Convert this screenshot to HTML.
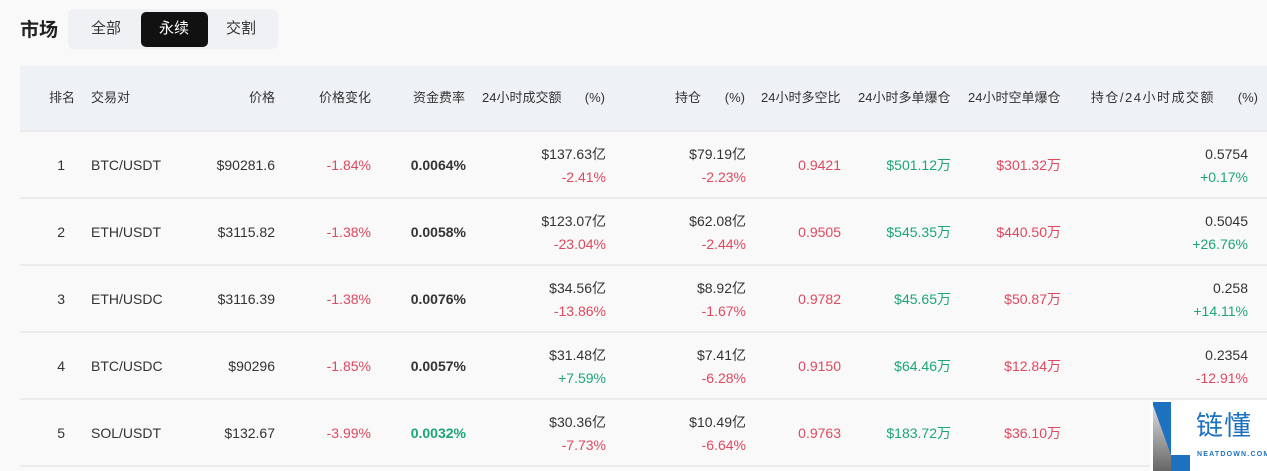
<!DOCTYPE html>
<html><head><meta charset="utf-8"><style>
body{margin:0;width:1267px;height:471px;background:#f9f9f9;font-family:"Liberation Sans","Noto Sans CJK SC",sans-serif;color:#333;overflow:hidden;position:relative}
.a{position:absolute;font-size:14px;line-height:16px;white-space:nowrap}
.h{font-size:13px;color:#333}
.red{color:#e0485e}.grn{color:#1ca57a}
.b{font-weight:bold}
.line{position:absolute;left:20px;right:0;height:2px;background:#ececec}
</style></head><body>
<div class="a" style="left:20px;top:20px;font-size:19px;line-height:22px;font-weight:bold;color:#222">市场</div>
<div style="position:absolute;left:68px;top:9px;width:210px;height:40px;background:#eff1f4;border-radius:6px"></div>
<div class="a" style="left:91px;top:21px;font-size:15px;color:#333">全部</div>
<div style="position:absolute;left:141px;top:12px;width:67px;height:35px;background:#111;border-radius:5px"></div>
<div class="a" style="left:159px;top:21px;font-size:15px;color:#fff">永续</div>
<div class="a" style="left:226px;top:21px;font-size:15px;color:#333">交割</div>
<div style="position:absolute;left:20px;top:66px;right:0;height:64px;background:#eef1f5"></div>
<div class="line" style="top:130px"></div>
<div class="line" style="top:197px"></div>
<div class="line" style="top:264px"></div>
<div class="line" style="top:331px"></div>
<div class="line" style="top:398px"></div>
<div class="line" style="top:465px"></div>
<script>
function t(txt,x,y,cls,right,st){var d=document.createElement('div');d.className='a '+(cls||'');d.textContent=txt;d.style.top=y+'px';if(right){d.style.right=(1267-x)+'px';d.style.textAlign='right';}else d.style.left=x+'px';if(st)d.style.cssText+=st;document.body.appendChild(d);}
var hy=90;
t('排名',49,hy,'h');t('交易对',91,hy,'h');t('价格',275,hy,'h',1);t('价格变化',371,hy,'h',1);t('资金费率',465,hy,'h',1);
t('24小时成交额',482,hy,'h');t('(%)',605,hy,'h',1);t('持仓',701,hy,'h',1);t('(%)',745,hy,'h',1);
t('24小时多空比',761,hy,'h');t('24小时多单爆仓',858,hy,'h');t('24小时空单爆仓',968,hy,'h');t('持仓/24小时成交额',1215,hy,'h',1,'letter-spacing:1.5px;');t('(%)',1258,hy,'h',1);
var R=[
['1','BTC/USDT','$90281.6','-1.84%','0.0064%','','$137.63亿','-2.41%','r','$79.19亿','-2.23%','r','0.9421','$501.12万','$301.32万','0.5754','+0.17%','g'],
['2','ETH/USDT','$3115.82','-1.38%','0.0058%','','$123.07亿','-23.04%','r','$62.08亿','-2.44%','r','0.9505','$545.35万','$440.50万','0.5045','+26.76%','g'],
['3','ETH/USDC','$3116.39','-1.38%','0.0076%','','$34.56亿','-13.86%','r','$8.92亿','-1.67%','r','0.9782','$45.65万','$50.87万','0.258','+14.11%','g'],
['4','BTC/USDC','$90296','-1.85%','0.0057%','','$31.48亿','+7.59%','g','$7.41亿','-6.28%','r','0.9150','$64.46万','$12.84万','0.2354','-12.91%','r'],
['5','SOL/USDT','$132.67','-3.99%','0.0032%','grn','$30.36亿','-7.73%','r','$10.49亿','-6.64%','r','0.9763','$183.72万','$36.10万','','','g']];
R.forEach(function(r,i){var c=157+67*i,l1=c-11,l2=c+12;
t(r[0],65,c,'',1);t(r[1],91,c);t(r[2],275,c,'',1);t(r[3],371,c,'red',1);t(r[4],466,c,'b '+r[5],1);
t(r[6],606,l1,'',1);t(r[7],606,l2,r[8]=='g'?'grn':'red',1);
t(r[9],746,l1,'',1);t(r[10],746,l2,r[11]=='g'?'grn':'red',1);
t(r[12],841,c,'red',1);t(r[13],951,c,'grn',1);t(r[14],1061,c,'red',1);
if(r[15]){t(r[15],1248,l1,'',1);t(r[16],1248,l2,r[17]=='g'?'grn':'red',1);}
});
</script>
<div style="position:absolute;left:1150px;top:400px;width:117px;height:71px;background:#fff"></div>
<svg style="position:absolute;left:1153px;top:402px" width="40" height="69">
<defs><linearGradient id="g" x1="0" y1="0" x2="0" y2="1"><stop offset="0" stop-color="#ddd"/><stop offset="1" stop-color="#666"/></linearGradient></defs>
<rect x="0" y="0" width="18" height="69" fill="#1d72c0"/>
<polygon points="0,3 18,53 18,69 0,69" fill="url(#g)"/>
<rect x="18" y="53" width="19" height="16" fill="#1d72c0"/>
</svg>
<div class="a" style="left:1196px;top:410px;font-size:27px;line-height:32px;color:#1d72c0;letter-spacing:1px">链懂</div>
<div class="a" style="left:1197px;top:451px;font-size:7px;line-height:8px;color:#1d72c0;font-weight:bold;letter-spacing:1.2px">NEATDOWN.COM</div>
</body></html>
